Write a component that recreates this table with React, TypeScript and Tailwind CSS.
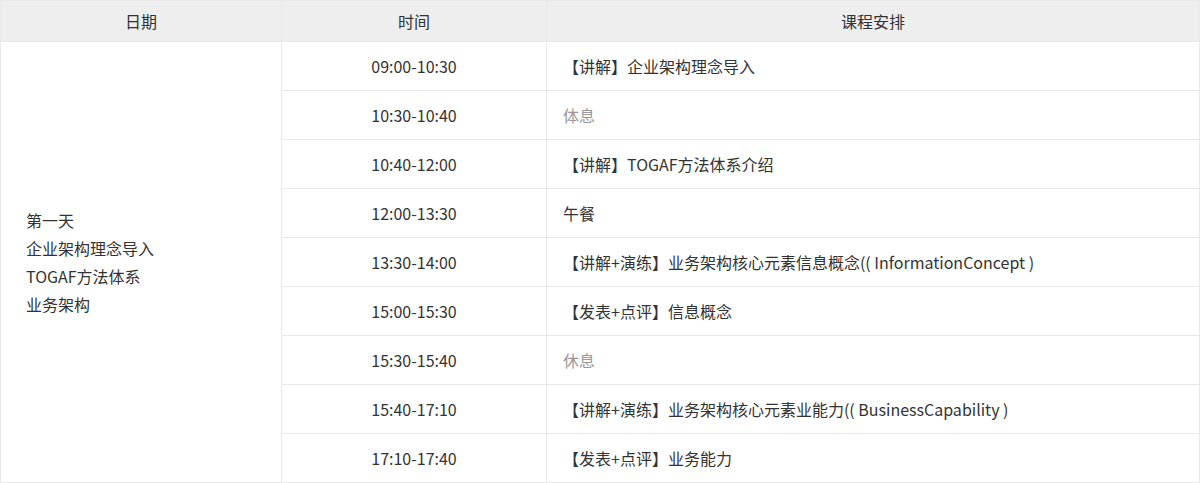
import React from 'react';

const rows = [
    { time: '09:00-10:30', text: '【讲解】企业架构理念导入' },
    { time: '10:30-10:40', text: '体息', muted: true },
    { time: '10:40-12:00', text: '【讲解】TOGAF方法体系介绍' },
    { time: '12:00-13:30', text: '午餐' },
    { time: '13:30-14:00', text: '【讲解+演练】业务架构核心元素信息概念(( InformationConcept )' },
    { time: '15:00-15:30', text: '【发表+点评】信息概念' },
    { time: '15:30-15:40', text: '休息', muted: true },
    { time: '15:40-17:10', text: '【讲解+演练】业务架构核心元素业能力(( BusinessCapability )' },
    { time: '17:10-17:40', text: '【发表+点评】业务能力' }
];

const App = () => {
    return (
        <div className="h-[483px] w-[1200px] bg-white font-['Noto_Sans_CJK_SC','Noto_Sans',sans-serif] text-[16px] text-[#333]">
            <table className="w-full table-fixed border-collapse border border-[#e8e8e8]">
                <colgroup>
                    <col className="w-[281px]" />
                    <col className="w-[265px]" />
                    <col />
                </colgroup>
                <thead>
                    <tr className="h-[41px] bg-[#eeeeee]">
                        <th className="border border-[#e8e8e8] font-normal">日期</th>
                        <th className="border border-[#e8e8e8] font-normal">时间</th>
                        <th className="border border-[#e8e8e8] font-normal">课程安排</th>
                    </tr>
                </thead>
                <tbody>
                    {rows.map((row, i) => (
                        <tr key={row.time} className="h-[49px]">
                            {i === 0 && (
                                <td rowSpan={rows.length} className="border border-[#e8e8e8] pl-[25px] align-middle leading-[28px]">
                                    <div>第一天</div>
                                    <div>企业架构理念导入</div>
                                    <div>TOGAF方法体系</div>
                                    <div>业务架构</div>
                                </td>
                            )}
                            <td className="border border-[#e8e8e8] text-center">{row.time}</td>
                            <td className={`border border-[#e8e8e8] pl-4 ${row.muted ? 'text-[#999]' : ''}`}>{row.text}</td>
                        </tr>
                    ))}
                </tbody>
            </table>
        </div>
    );
};

export default App;
